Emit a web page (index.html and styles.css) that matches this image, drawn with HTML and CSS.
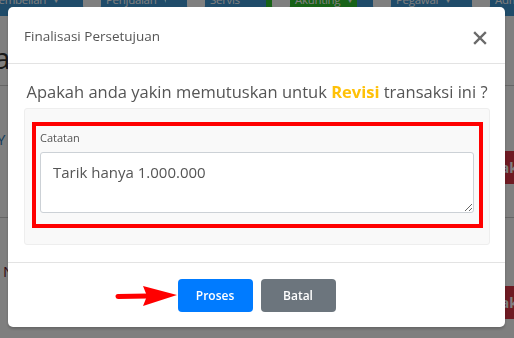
FILE: index.html
```html
<!DOCTYPE html>
<html>
<head>
<meta charset="utf-8">
<link rel="stylesheet" href="styles.css">
</head>
<body>
<div class="page">
  <nav class="navbar">
    <span class="nav-item w1">Pembelian <small>▾</small></span>
    <span class="nav-item w2"><span class="nav-ico"></span>Penjualan <small>▾</small></span>
    <span class="nav-item w3"><span class="nav-ico"></span>Servis <small>▾</small></span>
    <span class="nav-item w4 active"><span class="nav-ico"></span>Akunting <small>▾</small></span>
    <span class="nav-item w5"><span class="nav-ico"></span>Pegawai <small>▾</small></span>
    <span class="nav-item w6"><span class="nav-ico"></span>Admin</span>
  </nav>
  <div class="content">
    <h2 class="page-title">Data</h2>
    <div class="row">
      <span class="row-link">Y</span>
      <span class="row-btn">Tolak</span>
    </div>
    <div class="row row-2">
      <span class="row-name">N</span>
      <span class="row-btn">Tolak</span>
    </div>
  </div>
</div>

<div class="overlay">
  <div class="modal">
    <div class="modal-header">
      <span class="modal-title">Finalisasi Persetujuan</span>
      <svg class="close" width="14" height="14" viewBox="0 0 14 14">
        <path d="M2 2 L12 12 M12 2 L2 12" stroke="#6a6a6a" stroke-width="2.4" stroke-linecap="square"/>
      </svg>
    </div>
    <div class="modal-body">
      <p class="question">Apakah anda yakin memutuskan untuk <b class="revisi">Revisi</b> transaksi ini ?</p>
      <div class="panel">
        <div class="highlight">
          <label class="field-label">Catatan</label>
          <textarea class="note">Tarik hanya 1.000.000</textarea>
        </div>
      </div>
    </div>
    <div class="modal-footer">
      <svg class="arrow" width="64" height="24" viewBox="0 0 64 24">
        <line x1="4" y1="12.5" x2="34" y2="12" stroke="#f00" stroke-width="5" stroke-linecap="round"/>
        <polygon points="29,2 63,11 29,22 33,12" fill="#f00"/>
      </svg>
      <button class="btn btn-primary">Proses</button>
      <button class="btn btn-secondary">Batal</button>
    </div>
  </div>
</div>
</body>
</html>
```

FILE: styles.css
```css
* { box-sizing: border-box; }
html, body { margin: 0; padding: 0; }
body {
  font-family: "Open Sans", "Noto Sans", sans-serif;
  background: #fff;
  width: 514px;
  height: 338px;
  overflow: hidden;
}
.page { width: 514px; height: 338px; background: #fff; }
.navbar {
  height: 16px;
  background: #3e96d2;
  display: flex;
  align-items: flex-start;
  gap: 21px;
  overflow: hidden;
  white-space: nowrap;
}
.nav-item {
  flex: none;
  color: #fff;
  font-size: 11.5px;
  letter-spacing: -0.3px;
  line-height: 16px;
  margin-top: -8px;
  padding-bottom: 8px;
  display: flex;
  align-items: center;
  gap: 5px;
  overflow: hidden;
}
.w1 { width: 70px; margin-left: -8px; }
.w2 { width: 83px; }
.w3 { width: 58px; }
.w4 { width: 91px; }
.w5 { width: 78px; margin-left: -5px; }
.w6 { width: 60px; }
.nav-item small { font-size: 8px; margin-left: 3px; }
.nav-item.active { background: #2fc42f; padding: 0 8px 8px 6px; }
.nav-ico { display: inline-block; flex: none; width: 18px; height: 16px; background: #fff; border-radius: 2px; }
.page-title {
  margin: 0 0 0 -28px;
  height: 70px;
  padding-top: 24px;
  font-size: 30px;
  line-height: 36px;
  font-weight: 400;
  color: #333;
  border-bottom: 1px solid #ccc;
}
.row {
  height: 132px;
  border-bottom: 1px solid #ccc;
  display: flex;
  justify-content: space-between;
  align-items: flex-start;
}
.row-link { color: #2a7ab8; font-size: 15px; line-height: 20px; margin: 43px 0 0 -3px; }
.row-name { color: #6b1b2e; font-size: 15px; line-height: 20px; margin: 43px 0 0 3px; }
.row-btn {
  background: #dc3545;
  color: #fff;
  font-size: 14px;
  font-weight: 700;
  line-height: 33px;
  height: 33px;
  padding: 0 8px;
  margin: 65px -12px 0 0;
}
.row-2 .row-btn { margin-top: 68px; }

.overlay {
  position: fixed;
  inset: 0;
  background: rgba(0, 0, 0, 0.5);
}
.modal {
  position: relative;
  width: 497px;
  margin: 7px 0 0 8px;
  background: #fff;
  border-radius: 5px;
  height: 320px;
  box-shadow: 0 2px 3px rgba(0,0,0,0.2);
}
.modal-header {
  height: 57px;
  padding: 0 18px 0 16px;
  display: flex;
  justify-content: space-between;
  align-items: center;
  border-bottom: 1px solid #e3e3e3;
}
.modal-title { font-size: 13.5px; color: #555; margin-top: 1px; }
.close { margin-top: 6px; }
.modal-body { padding: 16px 15px 17px 16px; }
.question {
  margin: 0 -6px 4px;
  text-align: center;
  font-size: 16.5px;
  line-height: 24px;
  color: #555;
}
.revisi { color: #ffc107; font-weight: 700; }
.panel {
  background: #f9f9f9;
  border: 1px solid #eee;
  border-radius: 3px;
  padding: 13px 6px 16px 7px;
}
.highlight {
  border: 4px solid #f00;
  padding: 2px 5px 11px 4px;
}
.field-label {
  display: block;
  font-size: 11px;
  line-height: 20px;
  color: #555;
  margin-bottom: 4px;
}
.note {
  display: block;
  width: 100%;
  height: 61px;
  border: 1px solid #ccd1d6;
  border-radius: 3px;
  padding: 9px 12px;
  font-family: "Open Sans", "Noto Sans", sans-serif;
  font-size: 15px;
  line-height: 20px;
  color: #555;
  background: #fff;
  resize: vertical;
}
.modal-footer {
  position: relative;
  border-top: 1px solid #e3e3e3;
  height: 65px;
  display: flex;
  justify-content: center;
  align-items: center;
  gap: 8px;
}
.btn {
  width: 75px;
  height: 33px;
  border: none;
  border-radius: 4px;
  color: #fff;
  font-family: "Open Sans", "Noto Sans", sans-serif;
  font-size: 12px;
  font-weight: 600;
}
.btn-primary { background: #007bff; }
.btn-secondary { background: #6c757d; }
.arrow { position: absolute; left: 106px; top: 21px; }
```
